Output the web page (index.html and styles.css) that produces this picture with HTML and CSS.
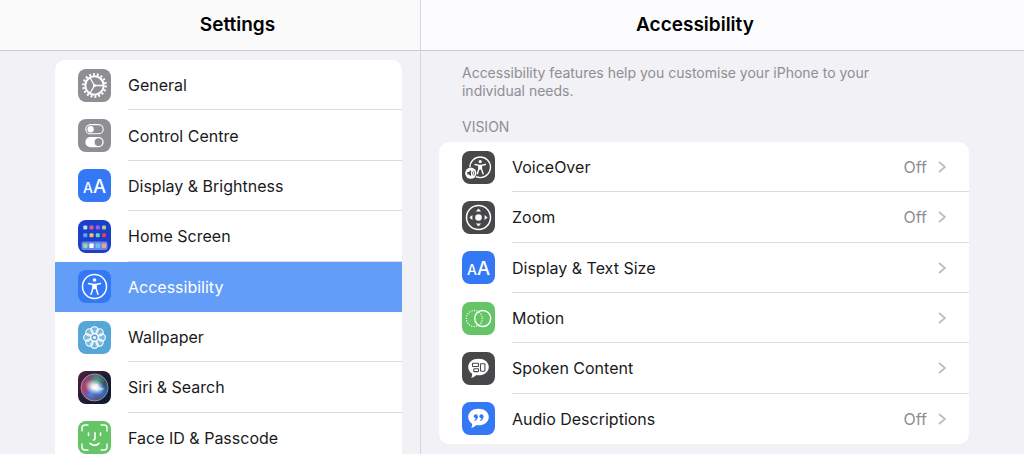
FILE: index.html
```html
<!DOCTYPE html>
<html lang="en-GB">
<head>
    <meta charset="UTF-8">
    <meta name="viewport" content="width=device-width, initial-scale=1.0">
    <title>Settings</title>
    <link rel="stylesheet" href="styles.css">
</head>
<body>
    <div class="settings">
        <nav class="sidebar">
            <header class="sidebar-header">
                <h1>Settings</h1>
            </header>
            <div class="sidebar-content">
                <ul class="list sidebar-list">
                    <li>
                        <a class="row" href="#general">
                            <svg class="icon gray" viewBox="0 0 33 33" aria-hidden="true">
                                <circle cx="16.5" cy="16.5" r="11.2" fill="none" stroke="#fff" stroke-width="2.4" stroke-dasharray="1.9 2.01"/>
                                <circle cx="16.5" cy="16.5" r="9.2" fill="none" stroke="#fff" stroke-width="2"/>
                                <circle cx="16.5" cy="16.5" r="1.6" fill="#fff"/>
                                <path d="M16.5 16.5h9M16.5 16.5l-4.6-8M16.5 16.5l-4.6 8" stroke="#fff" stroke-width="1.3"/>
                            </svg>
                            <span class="label">General</span>
                        </a>
                    </li>
                    <li>
                        <a class="row" href="#control-centre">
                            <svg class="icon gray" viewBox="0 0 33 33" aria-hidden="true">
                                <rect x="7.8" y="5.6" width="17.4" height="9.2" rx="4.6" fill="none" stroke="#fff" stroke-width="1.1"/>
                                <circle cx="12.6" cy="10.2" r="3.2" fill="#fff"/>
                                <rect x="7.3" y="18" width="18.4" height="10.2" rx="5.1" fill="#fff"/>
                                <circle cx="20.5" cy="23.1" r="3.9" fill="#8e8e93"/>
                            </svg>
                            <span class="label">Control Centre</span>
                        </a>
                    </li>
                    <li>
                        <a class="row" href="#display">
                            <svg class="icon blue" viewBox="0 0 33 33" aria-hidden="true">
                                <text class="letters" x="5" y="23.6" font-size="14">A</text>
                                <text class="letters" x="15" y="23.6" font-size="18.500">A</text>
                            </svg>
                            <span class="label">Display &amp; Brightness</span>
                        </a>
                    </li>
                    <li>
                        <a class="row" href="#home-screen">
                            <svg class="icon navy" viewBox="0 0 33 33" aria-hidden="true">
                                <rect x="3.5" y="21.5" width="26" height="8.5" rx="2" fill="#6c86e3"/>
                                <g>
                                    <rect x="5.3" y="5.5" width="4" height="4" rx="1" fill="#b6e3f2"/>
                                    <rect x="11.5" y="5.5" width="4" height="4" rx="1" fill="#e2607c"/>
                                    <rect x="17.8" y="5.5" width="4" height="4" rx="1" fill="#a05cf0"/>
                                    <rect x="24" y="5.5" width="4" height="4" rx="1" fill="#a9cf7d"/>
                                    <rect x="5.3" y="13.3" width="4" height="4" rx="1" fill="#4dabf5"/>
                                    <rect x="11.5" y="13.3" width="4" height="4" rx="1" fill="#f2bd63"/>
                                    <rect x="17.8" y="13.3" width="4" height="4" rx="1" fill="#6bd1c0"/>
                                    <rect x="24" y="13.3" width="4" height="4" rx="1" fill="#e04352"/>
                                    <rect x="5.1" y="23.6" width="4.4" height="4.4" rx="1" fill="#93d9a0"/>
                                    <rect x="11.3" y="23.6" width="4.4" height="4.4" rx="1" fill="#fff"/>
                                    <rect x="17.6" y="23.6" width="4.4" height="4.4" rx="1" fill="#62c3f5"/>
                                    <rect x="23.8" y="23.6" width="4.4" height="4.4" rx="1" fill="#eda08f"/>
                                </g>
                            </svg>
                            <span class="label">Home Screen</span>
                        </a>
                    </li>
                    <li>
                        <a class="row selected" href="#accessibility" aria-current="page">
                            <svg class="icon blue" viewBox="0 0 33 33" aria-hidden="true">
                                <circle cx="16.5" cy="16.5" r="12" fill="none" stroke="#fff" stroke-width="1.5"/>
                                <circle cx="16.5" cy="10" r="1.8" fill="#fff"/>
                                <path d="M10.5 13.4l4.5 1v3.8l-2 6M22.5 13.4l-4.5 1v3.8l2 6" fill="none" stroke="#fff" stroke-width="1.5" stroke-linecap="round" stroke-linejoin="round"/>
                                <path d="M14.5 13.7h4v5.2h-4z" fill="#fff"/>
                            </svg>
                            <span class="label">Accessibility</span>
                        </a>
                    </li>
                    <li>
                        <a class="row" href="#wallpaper">
                            <svg class="icon sky" viewBox="0 0 33 33" aria-hidden="true">
                                <g fill="#fff" fill-opacity=".2" stroke="#fff" stroke-width="1.1">
                                    <circle cx="16.5" cy="9.3" r="3.6"/>
                                    <circle cx="21.6" cy="11.4" r="3.6"/>
                                    <circle cx="23.7" cy="16.5" r="3.6"/>
                                    <circle cx="21.6" cy="21.6" r="3.6"/>
                                    <circle cx="16.5" cy="23.7" r="3.6"/>
                                    <circle cx="11.4" cy="21.6" r="3.6"/>
                                    <circle cx="9.3" cy="16.5" r="3.6"/>
                                    <circle cx="11.4" cy="11.4" r="3.6"/>
                                </g>
                                <circle cx="16.5" cy="16.5" r="4" fill="none" stroke="#fff"/>
                                <circle cx="16.5" cy="16.5" r="1.6" fill="#fff"/>
                            </svg>
                            <span class="label">Wallpaper</span>
                        </a>
                    </li>
                    <li>
                        <a class="row" href="#siri">
                            <svg class="icon siri" viewBox="0 0 33 33" aria-hidden="true">
                                <defs>
                                    <linearGradient id="siriRed" x1="0" y1="0" x2="1" y2="0">
                                        <stop offset="0" stop-color="#c23a6b"/>
                                        <stop offset=".5" stop-color="#5f5570"/>
                                        <stop offset="1" stop-color="#1d5560"/>
                                    </linearGradient>
                                    <radialGradient id="siriGreen">
                                        <stop offset="0" stop-color="#4fc08d"/>
                                        <stop offset="1" stop-color="#4fc08d" stop-opacity="0"/>
                                    </radialGradient>
                                    <radialGradient id="siriBlue">
                                        <stop offset="0" stop-color="#3f8cf0"/>
                                        <stop offset="1" stop-color="#3f6ce0" stop-opacity="0"/>
                                    </radialGradient>
                                    <radialGradient id="siriGlow">
                                        <stop offset="0" stop-color="#fff"/>
                                        <stop offset=".3" stop-color="#fff" stop-opacity=".85"/>
                                        <stop offset="1" stop-color="#fff" stop-opacity="0"/>
                                    </radialGradient>
                                </defs>
                                <circle cx="16.5" cy="16.5" r="13.5" fill="url(#siriRed)"/>
                                <circle cx="19" cy="9.5" r="8" fill="url(#siriGreen)" opacity=".7"/>
                                <circle cx="22" cy="20" r="9" fill="url(#siriBlue)"/>
                                <circle cx="13" cy="23" r="8" fill="url(#siriBlue)"/>
                                <ellipse cx="16.5" cy="16" rx="10" ry="7.5" fill="url(#siriGlow)" transform="rotate(20 16.5 16)"/>
                                <path d="M13 17l7-5 1 4 6 2-8 2z" fill="#fff" opacity=".5"/>
                                <circle cx="16.5" cy="16.5" r="13.5" fill="none" stroke="#a9a0b5" stroke-width=".8"/>
                            </svg>
                            <span class="label">Siri &amp; Search</span>
                        </a>
                    </li>
                    <li>
                        <a class="row" href="#face-id">
                            <svg class="icon green" viewBox="0 0 33 33" aria-hidden="true">
                                <g fill="none" stroke="#fff" stroke-width="1.4" stroke-linecap="round">
                                    <path d="M4 10V7q0-3 3-3h3M23 4h3q3 0 3 3v3M29 23v3q0 3-3 3h-3M10 29H7q-3 0-3-3v-3"/>
                                    <path d="M10.5 12v2.4M22.5 12v2.4M17 11.8v6q0 1.2-1.6 1.2M12 22.3q4.5 4 9 0" stroke-width="1.6"/>
                                </g>
                            </svg>
                            <span class="label">Face ID &amp; Passcode</span>
                        </a>
                    </li>
                </ul>
            </div>
        </nav>

        <main class="detail">
            <header class="detail-header">
                <h2>Accessibility</h2>
            </header>
            <div class="detail-content">
                <p class="intro">Accessibility features help you customise your iPhone to your individual needs.</p>
                <h3>VISION</h3>
                <ul class="list detail-list">
                    <li>
                        <a class="row" href="#voiceover">
                            <svg class="icon dark" viewBox="0 0 33 33" aria-hidden="true">
                                <circle cx="18.2" cy="16.3" r="10.3" fill="none" stroke="#fff" stroke-width="1.3"/>
                                <circle cx="18.2" cy="10.6" r="1.6" fill="#fff"/>
                                <path d="M13 13.5l4 .9v3.4l-1.7 5M23.4 13.5l-4 .9v3.4l1.7 5" fill="none" stroke="#fff" stroke-width="1.4" stroke-linecap="round" stroke-linejoin="round"/>
                                <path d="M16.4 13.8h3.6v4.6h-3.6z" fill="#fff"/>
                                <circle cx="8.8" cy="22.2" r="6.2" fill="#48484a"/>
                                <circle cx="8.8" cy="22.2" r="5.6" fill="#fff"/>
                                <path d="M5.3 21h1.6l2.1-1.9v6.2l-2.1-1.9H5.3z" fill="#48484a"/>
                                <path d="M10.2 20.7q1 1.5 0 3M11.7 19.6q1.8 2.6 0 5.2" fill="none" stroke="#48484a" stroke-width=".8"/>
                            </svg>
                            <span class="label">VoiceOver</span>
                            <span class="value">Off</span>
                            <svg class="chevron" viewBox="0 0 8 14" aria-hidden="true"><path d="M1 2l6 5-6 5"/></svg>
                        </a>
                    </li>
                    <li>
                        <a class="row" href="#zoom">
                            <svg class="icon dark" viewBox="0 0 33 33" aria-hidden="true">
                                <circle cx="16.5" cy="16.5" r="12" fill="none" stroke="#fff" stroke-width="1.5"/>
                                <circle cx="16.5" cy="16.5" r="3.3" fill="#fff"/>
                                <path d="M16.5 7.4l2.6 3h-5.2zM16.5 25.6l2.6-3h-5.2zM7.4 16.5l3-2.6v5.2zM25.6 16.5l-3-2.6v5.2z" fill="#fff"/>
                            </svg>
                            <span class="label">Zoom</span>
                            <span class="value">Off</span>
                            <svg class="chevron" viewBox="0 0 8 14" aria-hidden="true"><path d="M1 2l6 5-6 5"/></svg>
                        </a>
                    </li>
                    <li>
                        <a class="row" href="#text-size">
                            <svg class="icon blue" viewBox="0 0 33 33" aria-hidden="true">
                                <text class="letters" x="5" y="23.6" font-size="14">A</text>
                                <text class="letters" x="15" y="23.6" font-size="18.5">A</text>
                            </svg>
                            <span class="label">Display &amp; Text Size</span>
                            <svg class="chevron" viewBox="0 0 8 14" aria-hidden="true"><path d="M1 2l6 5-6 5"/></svg>
                        </a>
                    </li>
                    <li>
                        <a class="row" href="#motion">
                            <svg class="icon green" viewBox="0 0 33 33" aria-hidden="true">
                                <circle cx="20.7" cy="16.5" r="8" fill="none" stroke="#fff" stroke-width="1.4"/>
                                <circle cx="12.3" cy="16.5" r="8" fill="none" stroke="#fff" stroke-width="1.3" stroke-linecap="round" stroke-dasharray="0.1 2.41"/>
                            </svg>
                            <span class="label">Motion</span>
                            <svg class="chevron" viewBox="0 0 8 14" aria-hidden="true"><path d="M1 2l6 5-6 5"/></svg>
                        </a>
                    </li>
                    <li>
                        <a class="row" href="#spoken-content">
                            <svg class="icon dark" viewBox="0 0 33 33" aria-hidden="true">
                                <path d="M16.5 6.8c5.9 0 10.3 3.5 10.3 8.2s-4.4 8.3-10.3 8.3c-.8 0-1.5-.1-2.2-.2-1.4 1.5-3.3 2.6-5.2 2.8.8-1.2 1.2-2.700 1-4.100C7.700 20.200 6.200 17.800 6.200 15c0-4.700 4.400-8.200 10.300-8.200z" fill="#fff"/>
                                <g fill="none" stroke="#48484a" stroke-width="1.1">
                                    <rect x="10.5" y="11.2" width="6" height="3.3" rx=".6"/>
                                    <rect x="11.8" y="16.7" width="4.7" height="2.9" rx=".6"/>
                                    <rect x="18.5" y="11.8" width="4.4" height="7.4" rx=".6"/>
                                </g>
                            </svg>
                            <span class="label">Spoken Content</span>
                            <svg class="chevron" viewBox="0 0 8 14" aria-hidden="true"><path d="M1 2l6 5-6 5"/></svg>
                        </a>
                    </li>
                    <li>
                        <a class="row" href="#audio-descriptions">
                            <svg class="icon blue" viewBox="0 0 33 33" aria-hidden="true">
                                <path d="M16.5 6.8c5.9 0 10.3 3.5 10.3 8.2s-4.4 8.3-10.3 8.3c-.8 0-1.5-.1-2.2-.2-1.4 1.5-3.3 2.6-5.2 2.8.8-1.2 1.2-2.7 1-4.1C7.700 20.200 6.200 17.800 6.200 15c0-4.700 4.400-8.200 10.300-8.200z" fill="#fff"/>
                                <g fill="#3478f6">
                                    <circle cx="13.8" cy="14.2" r="2"/>
                                    <circle cx="19.4" cy="14.2" r="2"/>
                                    <path d="M15.8 14.2q.2 3.6-3.2 4.8l-.4-.8q1.600-.8 1.800-2.400zM21.400 14.200q.2 3.600-3.200 4.800l-.4-.8q1.600-.8 1.800-2.400z"/>
                                </g>
                            </svg>
                            <span class="label">Audio Descriptions</span>
                            <span class="value">Off</span>
                            <svg class="chevron" viewBox="0 0 8 14" aria-hidden="true"><path d="M1 2l6 5-6 5"/></svg>
                        </a>
                    </li>
                </ul>
            </div>
        </main>
    </div>
</body>
</html>
```
FILE: styles.css
```css
* {
    box-sizing: border-box;
}

body {
    margin: 0;
    font-family: Inter, "Liberation Sans", sans-serif;
    font-size: 16px;
    line-height: 20px;
    color: #1a1a1c;
    background-color: #f1f1f6;
}

h1, h2, h3, p, ul {
    margin: 0;
    padding: 0;
}

.settings {
    display: grid;
    grid-template-columns: 37fr 53fr;
    height: 100vh;
    overflow: hidden;
}

.sidebar, .detail {
    display: flex;
    flex-direction: column;
    min-width: 0;
    min-height: 0;
}

.sidebar {
    border-right: 1px solid #d5d5da;
}

/* Header bars */
.sidebar-header, .detail-header {
    flex: none;
    display: flex;
    align-items: center;
    justify-content: center;
    height: 51px;
    border-bottom: 1px solid #c9c9ce;
}

.sidebar-header {
    padding-left: 55px;
    background-color: #fafafa;
}

.detail-header {
    padding-right: 55px;
    background-color: #fcfcfe;
}

h1, h2 {
    font-size: 19px;
    font-weight: 600;
    line-height: 26px;
    color: #000;
}

.sidebar-content, .detail-content {
    flex: 1;
    min-height: 0;
    overflow-y: auto;
    scrollbar-width: none;
}

.sidebar-content {
    padding: 9px 18px 0 55px;
}

.detail-content {
    padding: 13px 55px 10px 18px;
}

.intro, h3 {
    padding: 0 23px;
    font-size: 14px;
    font-weight: 400;
    line-height: 18px;
    color: #8e8e93;
}

.intro {
    max-width: 460px;
}

h3 {
    margin: 18px 0 6px;
}

/* Grouped lists */
.list {
    display: grid;
    list-style: none;
    border-radius: 10px;
    background-color: #fff;
    overflow: hidden;
}

.sidebar-list {
    min-height: 403px;
}

.detail-list {
    min-height: 302px;
}

.list li {
    display: grid;
}

.row {
    display: flex;
    align-items: center;
    min-height: 50px;
    padding-left: 23px;
    color: inherit;
    text-decoration: none;
    position: relative;
}

.row::after {
    content: "";
    position: absolute;
    left: 73px;
    right: 0;
    bottom: 0;
    height: 1px;
    background-color: #dcdcdf;
}

.row.selected::after,
.list li:last-child .row::after {
    display: none;
}

.row.selected {
    color: #fff;
    background-color: #629df8;
}

.label {
    flex: 1;
    margin-left: 17px;
}

.value {
    color: #8e8e93;
}

.chevron {
    width: 8px;
    height: 14px;
    margin: 0 23px 0 11px;
    fill: none;
    stroke: #bcbcc0;
    stroke-width: 1.7;
}

/* App icons */
.icon {
    flex: none;
    width: 33px;
    height: 33px;
    border-radius: 8px;
}

.letters {
    font-family: Inter, sans-serif;
    font-weight: 500;
    fill: #fff;
}

.gray {
    background-color: #8e8e93;
}

.blue {
    background-color: #3478f6;
}

.navy {
    background-color: #1c3fcb;
}

.sky {
    background-color: #55a7d6;
}

.siri {
    background: linear-gradient(135deg, #4a2340, #121a30 70%);
}

.green {
    background-color: #65c466;
}

.dark {
    background-color: #48484a;
}
```
